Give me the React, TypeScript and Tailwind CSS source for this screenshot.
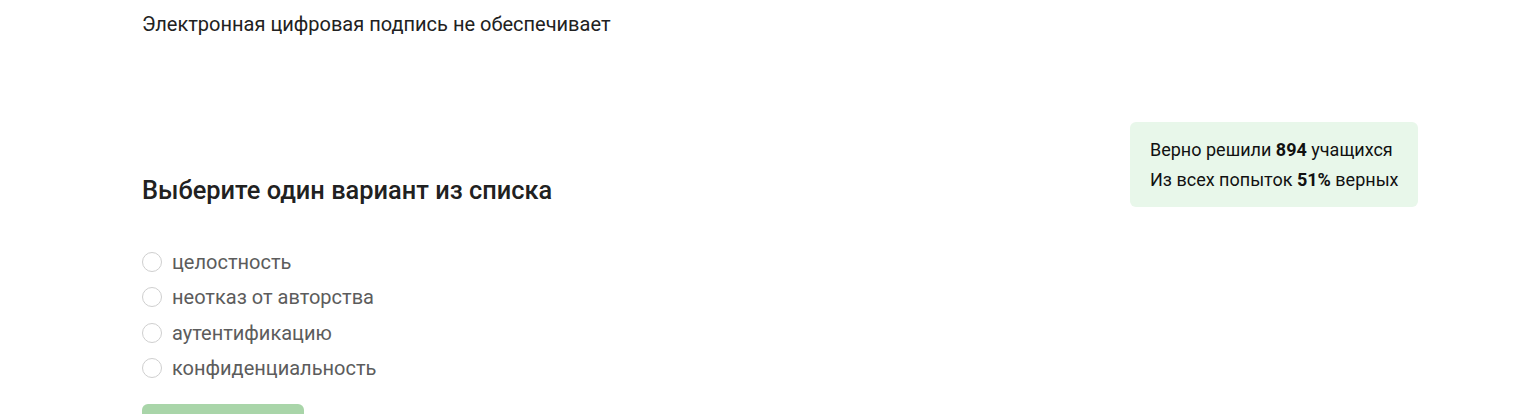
const options = [
  "целостность",
  "неотказ от авторства",
  "аутентификацию",
  "конфиденциальность",
]

export default function App() {
  return (
    <div className="min-h-screen bg-white font-['Roboto',_'Liberation_Sans',_sans-serif] text-[#212121]">
      <div className="pl-[142px] pr-[113px] pt-3">
        {/* Question */}
        <p className="text-xl leading-6">
          Электронная цифровая подпись не обеспечивает
        </p>

        <div className="mt-[86px] flex items-start justify-between">
          {/* Answer block */}
          <div className="flex flex-col">
            <h2 className="mt-[52px] text-[25.4px] font-medium leading-8">
              Выберите один вариант из списка
            </h2>

            <div className="mt-[38px] flex flex-col">
              {options.map((opt) => (
                <label
                  key={opt}
                  className="flex h-[35.5px] cursor-pointer items-center gap-[10px]"
                >
                  <span className="h-5 w-5 shrink-0 rounded-full border border-[#cfcfcf] bg-white" />
                  <span className="text-xl leading-6 text-[#5c5c5c]">{opt}</span>
                </label>
              ))}
            </div>

            <button className="mt-[18px] h-11 w-[162px] rounded-md bg-[#a9d5a9]" />
          </div>

          {/* Stats */}
          <div className="w-[288px] whitespace-nowrap rounded-md bg-[#e8f7ea] pl-5 pb-3 pt-[13px] text-lg leading-[30px] text-[#111]">
            <div>
              Верно решили <b className="font-bold">894</b> учащихся
            </div>
            <div>
              Из всех попыток <b className="font-bold">51%</b> верных
            </div>
          </div>
        </div>
      </div>
    </div>
  )
}
